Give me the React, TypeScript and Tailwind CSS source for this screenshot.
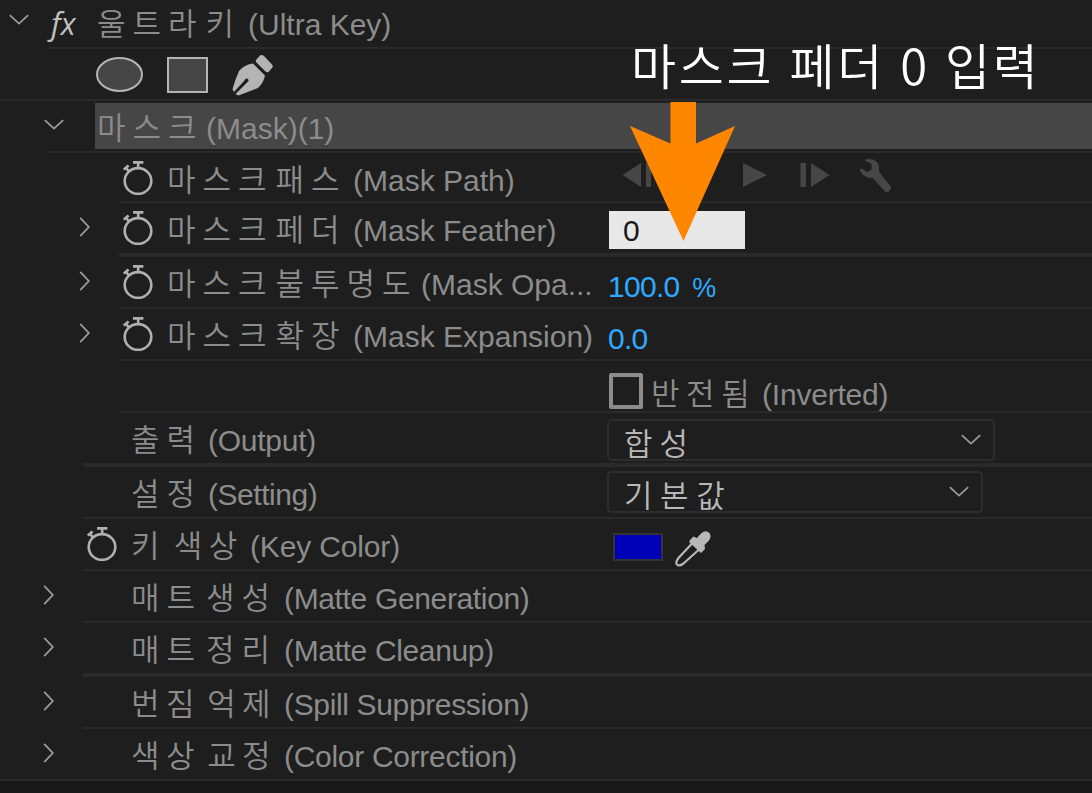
import type { ReactNode } from 'react';
import clsx from 'clsx';

interface RowProps {
  height: string;
  indent: string;
  line: string;
  thick?: boolean;
  open?: boolean;
  stopwatch?: boolean;
  ko: string;
  koStyle: string;
  en: string;
  enStyle?: string;
  children?: ReactNode;
}

function ChevronDown({ className }: { className?: string }) {
  return (
    <svg width="20" height="12" viewBox="0 0 20 12" fill="none" stroke="currentColor" strokeWidth="1.8" className={className}>
      <path d="M0.8 1.2 L10 9.6 L19.2 1.2" />
    </svg>
  );
}

function ChevronRight() {
  return (
    <svg width="12" height="20" viewBox="0 0 12 20" fill="none" stroke="#9a9a9a" strokeWidth="1.8" className="mt-[14px]">
      <path d="M1.2 0.8 L9.8 10 L1.2 19.2" />
    </svg>
  );
}

function Stopwatch() {
  return (
    <svg width="30" height="34" viewBox="0 0 30 34" fill="none" stroke="#b0b0b0" strokeWidth="2.6" className="mt-2 shrink-0">
      <ellipse cx="15" cy="20" rx="13.3" ry="12.9" />
      <path d="M10 1.4h10.4M15.2 2v5M0.8 8.6 L5.6 4.4M2.4 6.4l3.4 3.8" />
    </svg>
  );
}

function KeyframeNav() {
  return (
    <svg width="272" height="36" viewBox="0 0 272 36" fill="#464646" className="ml-[14px] mt-[5px]">
      <path d="M0.5 17 L19 5V29ZM24 5h5v24h-5Z" />
      <path d="M121 5 L145 17 L121 29Z" />
      <path d="M178.500 5h5.500v24h-5.500ZM189 5 L207.500 17 L189 29Z" />
      <path d="M243 1.500C250-0.500 257 3 257 9C257 11 256.500 13 258 15L268.500 28C270 31 267 35 263.500 34L250.500 20C247 20.500 241 19 237.500 11.500L240 10.500L245 14L249.500 11.500V6L243 2.500Z" />
    </svg>
  );
}

function Eyedropper() {
  return (
    <svg width="36" height="36" viewBox="0 0 36 36" className="ml-[12px] mt-3">
      <path d="M17 12.500 L3.500 27 Q0 31.500 2 33.500 Q4 35.800 8.500 32.500 L23.500 19" fill="none" stroke="#b8b8b8" strokeWidth="2.200" />
      <path d="M14.500 9.500L18.500 5.500L22 7L26 2.500Q31-1.500 34.500 2Q37 6 33.500 10L29.500 14L30 18L26 22L14.500 11.500Z" fill="#b8b8b8" />
    </svg>
  );
}

function Row({ height, indent, line, thick, open, stopwatch, ko, koStyle, en, enStyle, children }: RowProps) {
  return (
    <div className={clsx('flex flex-col', height)}>
      <div className="flex min-h-0 flex-1">
        <div className="flex w-[608px] shrink-0">
          <div className={clsx('flex shrink-0 justify-end pr-7', indent)}>{open && <ChevronRight />}</div>
          <div className="w-[49px] shrink-0 pl-1">{stopwatch && <Stopwatch />}</div>
          <Label ko={ko} koStyle={koStyle} en={en} enStyle={enStyle} />
        </div>
        {children}
      </div>
      <div className={clsx('shrink-0 bg-[#2a2a2a]', line, thick ? 'h-1' : 'h-0.5')} />
    </div>
  );
}

function Label({ ko, koStyle, en, enStyle }: { ko: string; koStyle: string; en: string; enStyle?: string }) {
  return (
    <div className="flex items-baseline whitespace-nowrap text-[30px] leading-[50px] text-[#8c8c8c]">
      <span className={clsx("-ml-px mr-px shrink-0 font-['Noto_Sans_CJK_KR',sans-serif] text-[31px] font-[350]", koStyle)}>{ko}</span>
      <span className={enStyle}>{en}</span>
    </div>
  );
}

function Dropdown({ value, className, textStyle }: { value: string; className: string; textStyle: string }) {
  return (
    <div className={clsx('flex h-[42px] justify-between rounded-[5px] border-2 border-[#2d2d2d] pl-[15px] pr-3 text-[#b8b8b8]', className)}>
      <span className={clsx("whitespace-nowrap font-['Noto_Sans_CJK_KR',sans-serif] text-[31px] font-[350] leading-[41px]", textStyle)}>
        {value}
      </span>
      <ChevronDown className="mt-[13px] text-[#9a9a9a]" />
    </div>
  );
}

export default function App() {
  return (
    <div className="relative h-[793px] w-[1092px] overflow-hidden bg-[#1e1e1e] font-['Liberation_Sans','Noto_Sans_CJK_KR',sans-serif]">
      {/* Effect header */}
      <div className="flex h-[49px] flex-col">
        <div className="flex min-h-0 flex-1">
          <div className="w-[49px] shrink-0 pl-[9px] pt-[14px] text-[#9a9a9a]">
            <ChevronDown />
          </div>
          <span className="w-[49px] shrink-0 pl-0.5 font-['Open_Sans',sans-serif] text-[31px] italic leading-[47px] text-[#c0c0c0]">fx</span>
          <div className="-mt-[3px]">
            <Label ko="울트라 키" koStyle="w-[150px] tracking-[7px] [word-spacing:-12px]" en="(Ultra Key)" />
          </div>
        </div>
        <div className="ml-[49px] h-0.5 shrink-0 bg-[#2a2a2a]" />
      </div>

      {/* Mask shape tools */}
      <div className="flex h-[52px] flex-col">
        <div className="flex flex-1 pl-[96px] pt-[6px]">
          <svg width="180" height="42" viewBox="0 0 180 42" fill="#464646" stroke="#b4b4b4" strokeWidth="2">
            <ellipse cx="23.500" cy="19.500" rx="22.500" ry="16.500" />
            <rect x="72" y="3" width="39" height="34" />
            <g fill="#b4b4b4" stroke="none">
              <path d="M164 0.500Q166-0.500 168 1L176 9.500Q177.500 11 176 13L172.500 17Q171 18 169 16L160.500 7.500Q159 6 160.500 4.500Z" />
              <path d="M157 8.500L169 20.500Q167.500 28 162 33Q152 37 142.500 40.500L139.500 39L151 27.500Q153.500 26 152 24Q149.500 22.500 148.500 25.500L138 37L136.500 34Q139 25 143 16Q149 9 157 8.500Z" />
            </g>
          </svg>
        </div>
        <div className="h-0.5 bg-[#2a2a2a]" />
      </div>

      {/* Selected mask */}
      <div className="flex h-[52px] flex-col">
        <div className="flex min-h-0 flex-1">
          <div className="w-[95px] shrink-0 pl-11 pt-[18px] text-[#9a9a9a]">
            <ChevronDown />
          </div>
          <div className="mb-0.5 mt-0.5 flex-1 bg-[#464646] pl-[3px]">
            <div className="-mt-0.5">
              <Label ko="마스크" koStyle="w-[108px] tracking-[7px]" en="(Mask)(1)" />
            </div>
          </div>
        </div>
        <div className="ml-[49px] h-0.5 shrink-0 bg-[#2a2a2a]" />
      </div>

      <Row height="h-[50px]" indent="w-[119px]" line="ml-[119px]" stopwatch ko="마스크 패스" koStyle="w-[185px] tracking-[7px] [word-spacing:-12px]" en="(Mask Path)">
        <KeyframeNav />
      </Row>

      <Row height="h-[54px]" indent="w-[119px]" line="ml-[119px]" thick open stopwatch ko="마스크 페더" koStyle="w-[185px] tracking-[7px] [word-spacing:-12px]" en="(Mask Feather)">
        <div className="ml-px mt-2 h-[38px] w-[136px] bg-[#e8e8e8] pl-[14px] text-[30px] leading-[39px] text-[#1a1a1a]">0</div>
      </Row>

      <Row height="h-[52px]" indent="w-[119px]" line="ml-[119px]" open stopwatch ko="마스크 불투명도" koStyle="w-[253px] tracking-[7px] [word-spacing:-12px]" en="(Mask Opa...">
        <span className="pt-1 text-[30px] leading-[52px] tracking-[-0.7px] text-[#2eaaff] [word-spacing:5px]">
          100.0 <span className="text-[27px]">%</span>
        </span>
      </Row>

      <Row height="h-[52px]" indent="w-[119px]" line="ml-[119px]" open stopwatch ko="마스크 확장" koStyle="w-[185px] tracking-[7px] [word-spacing:-12px]" en="(Mask Expansion)">
        <span className="pt-1 text-[30px] leading-[52px] tracking-[-0.7px] text-[#2eaaff]">0.0</span>
      </Row>

      <Row height="h-[52px]" indent="w-[119px]" line="ml-[119px]" ko="" koStyle="" en="">
        <div className="ml-px mt-3 h-9 w-[34px] shrink-0 rounded-[2px] border-4 border-[#8c8c8c]" />
        <div className="ml-[9px] mt-[6px]">
          <Label ko="반전됨" koStyle="w-[110px] tracking-[6.6px]" en="(Inverted)" enStyle="tracking-[-0.2px]" />
        </div>
      </Row>

      <Row height="h-[54px]" indent="w-[83px]" line="ml-[83px]" thick ko="출력" koStyle="w-[76px] tracking-[7px]" en="(Output)" enStyle="tracking-[-0.25px]">
        <Dropdown value="합성" className="-ml-px mt-[6px] w-[388px]" textStyle="tracking-[7px]" />
      </Row>

      <Row height="h-[52px]" indent="w-[83px]" line="ml-[83px]" ko="설정" koStyle="w-[76px] tracking-[7px]" en="(Setting)" enStyle="tracking-[-0.45px]">
        <Dropdown value="기본값" className="-ml-px mt-1 w-[376px]" textStyle="tracking-[7.6px]" />
      </Row>

      <Row height="h-[52px]" indent="w-[83px]" line="ml-[83px]" stopwatch ko="키 색상" koStyle="w-[118px] tracking-[6.6px] [word-spacing:-6px]" en="(Key Color)" enStyle="tracking-[-0.15px]">
        <div className="ml-[5px] mt-[14px] h-7 w-[50px] border-2 border-[#333333] bg-[#0000b8]" />
        <Eyedropper />
      </Row>

      <Row height="h-[52px]" indent="w-[83px]" line="ml-[83px]" open ko="매트 생성" koStyle="w-[152px] tracking-[7px] [word-spacing:-10px]" en="(Matte Generation)" enStyle="tracking-[-0.35px]" />
      <Row height="h-[54px]" indent="w-[83px]" line="ml-[83px]" thick open ko="매트 정리" koStyle="w-[152px] tracking-[7px] [word-spacing:-10px]" en="(Matte Cleanup)" enStyle="tracking-[-0.35px]" />
      <Row height="h-[52px]" indent="w-[83px]" line="ml-[83px]" open ko="번짐 억제" koStyle="w-[152px] tracking-[6.4px] [word-spacing:-7px]" en="(Spill Suppression)" enStyle="tracking-[-0.35px]" />
      <Row height="h-[52px]" indent="w-[83px]" line="ml-0" open ko="색상 교정" koStyle="w-[152px] tracking-[6.4px] [word-spacing:-7px]" en="(Color Correction)" enStyle="tracking-[-0.3px]" />
      <div className="h-3 bg-[#181818]" />

      {/* Annotation over the panel */}
      <div className="absolute left-[631px] top-[26px] whitespace-nowrap font-['Noto_Sans_CJK_KR',sans-serif] text-[49px] font-[350] leading-[76px] tracking-[2.7px] text-white [word-spacing:1.5px]">
        마스크 페더 0 입력
      </div>
      <svg width="106" height="140" viewBox="0 0 106 140" className="absolute left-[630px] top-[102px]">
        <path d="M40.500 0H66V41.500L105 24L53.500 139L0 24L40.500 41.500Z" fill="#ff8700" />
      </svg>
    </div>
  );
}
